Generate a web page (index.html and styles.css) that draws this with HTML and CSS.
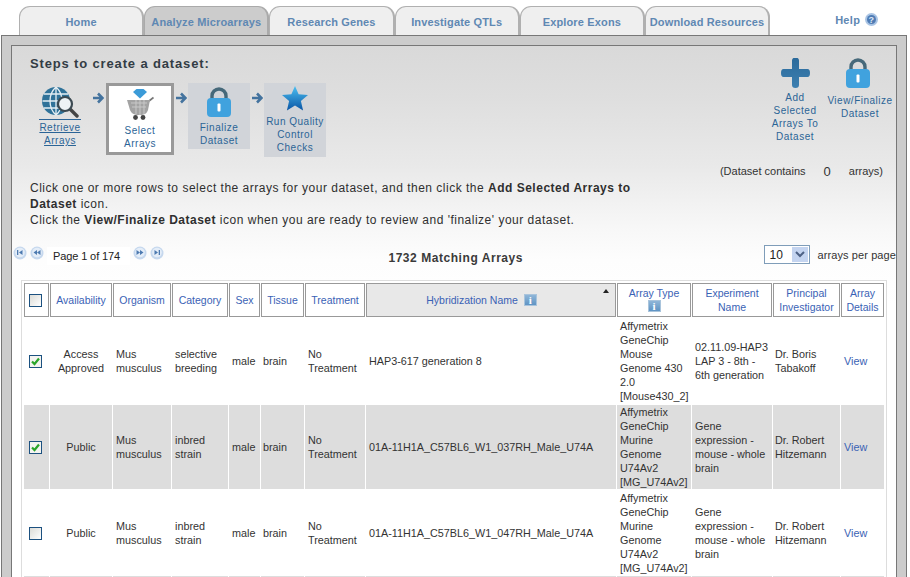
FILE: index.html
```html
<!DOCTYPE html>
<html lang="en">
<head>
    <meta charset="UTF-8">
    <title>Analyze Microarrays</title>
    <link rel="stylesheet" href="styles.css">
</head>
<body>
    <svg class="defs" width="0" height="0">
        <defs>
            <linearGradient id="starFill" x1="0" y1="0" x2="0" y2="1">
                <stop offset="0" stop-color="#4cc0f2"/>
                <stop offset="1" stop-color="#0a55a5"/>
            </linearGradient>
            <linearGradient id="plusFill" x1="0" y1="0" x2="0" y2="1">
                <stop offset="0" stop-color="#2b6a9b"/>
                <stop offset="1" stop-color="#3d7fb0"/>
            </linearGradient>
            <symbol id="arrow" viewBox="0 0 12 12">
                <path d="M1 6h8M6 1.500l4.500 4.500-4.500 4.500" fill="none" stroke="#44739e" stroke-width="2.600"/>
            </symbol>
            <symbol id="lock" viewBox="0 0 24 30">
                <path d="M5 13V9a7 7 0 0 1 14 0v4" fill="none" stroke="#46697a" stroke-width="3.400"/>
                <rect y="11" width="24" height="19" rx="4" fill="#40a2de"/>
                <rect x="10.500" y="16.500" width="3" height="8" rx="1" fill="#fff"/>
            </symbol>
            <symbol id="pageBtn" viewBox="0 0 14 14">
                <circle cx="7" cy="7" r="6.500" fill="#c6d8ee"/>
                <circle cx="7" cy="6.500" r="4.800" fill="#e4edf8"/>
            </symbol>
        </defs>
    </svg>

    <!-- Main tabs -->
    <div class="tabs">
        <a class="tab">Home</a>
        <a class="tab active">Analyze Microarrays</a>
        <a class="tab">Research Genes</a>
        <a class="tab">Investigate QTLs</a>
        <a class="tab">Explore Exons</a>
        <a class="tab">Download Resources</a>
        <a class="help">Help
            <svg width="13" height="13" viewBox="0 0 13 13">
                <circle cx="6.500" cy="6.500" r="6.500" fill="#a9c4e4"/>
                <circle cx="6.500" cy="6.500" r="4.500" fill="#4f7cb5"/>
                <text x="6.500" y="9.500" text-anchor="middle" class="help-mark">?</text>
            </svg>
        </a>
    </div>

    <div class="frame">
        <div class="inner">
            <div class="top">
                <div class="steps-col">
                    <h2>Steps to create a dataset:</h2>
                    <div class="steps">
                        <a class="step step-link">
                            <svg width="38" height="31" viewBox="0 0 38 31">
                                <circle cx="15" cy="14" r="14" fill="#2f7299"/>
                                <path d="M1.500 14h27M3 7h24M3 21h24M15 0v28M15 0c-8 7-8 21 0 28M15 0c8 7 8 21 0 28" fill="none" stroke="#e4eef4" stroke-width="1.300"/>
                                <path d="M28 21l8 8" stroke="#444" stroke-width="3.400" stroke-linecap="round"/>
                                <circle cx="24" cy="17" r="7" fill="#eef3f6" stroke="#3c4a52" stroke-width="2.200"/>
                            </svg>
                            <span class="step-label"><u class="over">Retrieve</u><br><u>Arrays</u></span>
                        </a>
                        <svg class="step-arrow" width="12" height="12"><use href="#arrow"/></svg>
                        <div class="step step-current">
                            <svg width="28" height="31" viewBox="0 0 28 31">
                                <path d="M7 3l3.500-3h7L21 3l-7 6.500z" fill="#3b9bd8"/>
                                <path d="M27.500 8.500L23 12" stroke="#777" stroke-width="1.600"/>
                                <path d="M1 11h23l-2 10c-1 3-3 5-9 5-5 0-8-2-9-5z" fill="#a3a3a3"/>
                                <path d="M5 14h16M6 18h14M10 11v14M14 11v15M18 11v14" stroke="#c8c8c8" stroke-width="1"/>
                                <circle cx="9.500" cy="28.500" r="2.400" fill="#444"/>
                                <circle cx="17" cy="28.500" r="2.400" fill="#444"/>
                            </svg>
                            <span class="step-label">Select<br>Arrays</span>
                        </div>
                        <svg class="step-arrow" width="12" height="12"><use href="#arrow"/></svg>
                        <div class="step step-next">
                            <svg width="24" height="30"><use href="#lock"/></svg>
                            <span class="step-label">Finalize<br>Dataset</span>
                        </div>
                        <svg class="step-arrow" width="12" height="12"><use href="#arrow"/></svg>
                        <div class="step step-next step-qc">
                            <svg width="26" height="25" viewBox="0 0 26 25">
                                <path d="M13 0l3.600 8.300 9.400.8-7.100 6 2.200 9.400L13 19.500 4.900 24.500l2.200-9.400-7.100-6 9.400-.8z" fill="url(#starFill)"/>
                            </svg>
                            <span class="step-label">Run Quality<br>Control<br>Checks</span>
                        </div>
                    </div>
                </div>
                <div class="actions">
                    <a class="action action-add">
                        <svg width="29" height="30" viewBox="0 0 29 30">
                            <path d="M11 2.500a3 2.500 0 0 1 7 0V11h8.500a2.500 4 0 0 1 0 8H18v8a3 2.500 0 0 1-7 0v-8H2.500a2.500 4 0 0 1 0-8H11z" fill="url(#plusFill)"/>
                        </svg>
                        <span class="step-label">Add<br>Selected<br>Arrays To<br>Dataset</span>
                    </a>
                    <a class="action action-view">
                        <svg class="view-lock" width="24" height="30"><use href="#lock"/></svg>
                        <span class="step-label">View/Finalize<br>Dataset</span>
                    </a>
                </div>
            </div>

            <div class="dataset-count">
                <span>(Dataset contains</span>
                <span class="count">0</span>
                <span>arrays)</span>
            </div>

            <p class="instructions">
                Click one or more rows to select the arrays for your dataset, and then click the <b>Add Selected Arrays to</b><br>
                <b>Dataset</b> icon.<br>
                Click the <b>View/Finalize Dataset</b> icon when you are ready to review and 'finalize' your dataset.
            </p>

            <!-- Pager -->
            <div class="pager-row">
                <div class="pager">
                    <svg class="page-btn" width="14" height="14" viewBox="0 0 14 14"><use href="#pageBtn"/><path d="M4 4h1.300v5H4zM9.500 4v5L6 6.500z" fill="#4d7ab0"/></svg>
                    <svg class="page-btn" width="14" height="14" viewBox="0 0 14 14"><use href="#pageBtn"/><path d="M7 4v5L3.500 6.500zM10.500 4v5L7 6.500z" fill="#4d7ab0"/></svg>
                    <span class="page-text">Page 1 of 174</span>
                    <svg class="page-btn" width="14" height="14" viewBox="0 0 14 14"><use href="#pageBtn"/><path d="M3.500 4v5L7 6.500zM7 4v5l3.500-2.500z" fill="#4d7ab0"/></svg>
                    <svg class="page-btn" width="14" height="14" viewBox="0 0 14 14"><use href="#pageBtn"/><path d="M4.500 4v5L8 6.500zM8.700 4H10v5H8.700z" fill="#4d7ab0"/></svg>
                </div>
                <div class="matching">1732 Matching Arrays</div>
                <div class="per-page">
                    <div class="fake-select">
                        <span class="fake-value">10</span>
                        <span class="fake-arrow">
                            <svg width="10" height="7" viewBox="0 0 10 7"><path d="M1 1l4 4 4-4" fill="none" stroke="#4d6185" stroke-width="2"/></svg>
                        </span>
                    </div>
                    <span>arrays per page</span>
                </div>
            </div>

            <div class="table-wrap">
                <table class="arrays">
                    <colgroup>
                        <col class="c-check"><col class="c-avail"><col class="c-org"><col class="c-cat">
                        <col class="c-sex"><col class="c-tissue"><col class="c-treat"><col class="c-hyb">
                        <col class="c-type"><col class="c-exp"><col class="c-pi"><col class="c-view">
                    </colgroup>
                    <thead>
                        <tr>
                            <th><span class="check"></span></th>
                            <th>Availability</th>
                            <th>Organism</th>
                            <th>Category</th>
                            <th>Sex</th>
                            <th>Tissue</th>
                            <th>Treatment</th>
                            <th class="sorted">Hybridization Name <span class="info">i</span><span class="sort-up"></span></th>
                            <th class="type-head">Array Type<br><span class="info">i</span></th>
                            <th>Experiment<br>Name</th>
                            <th>Principal<br>Investigator</th>
                            <th>Array<br>Details</th>
                        </tr>
                    </thead>
                    <tbody>
                        <tr>
                            <td class="check-cell"><span class="check checked"><svg width="11" height="11" viewBox="0 0 11 11"><path d="M2 5.500l2.500 2.500L9 2.500" fill="none" stroke="#2aa52a" stroke-width="2.200"/></svg></span></td>
                            <td class="center">Access<br>Approved</td>
                            <td>Mus<br>musculus</td>
                            <td>selective<br>breeding</td>
                            <td>male</td>
                            <td class="tight">brain</td>
                            <td>No<br>Treatment</td>
                            <td>HAP3-617 generation 8</td>
                            <td>Affymetrix<br>GeneChip<br>Mouse<br>Genome 430<br>2.0<br>[Mouse430_2]</td>
                            <td>02.11.09-HAP3<br>LAP 3 - 8th -<br>6th generation</td>
                            <td class="tight">Dr. Boris<br>Tabakoff</td>
                            <td><a class="view">View</a></td>
                        </tr>
                        <tr class="alt">
                            <td class="check-cell"><span class="check checked"><svg width="11" height="11" viewBox="0 0 11 11"><path d="M2 5.500l2.500 2.500L9 2.500" fill="none" stroke="#2aa52a" stroke-width="2.200"/></svg></span></td>
                            <td class="center">Public</td>
                            <td>Mus<br>musculus</td>
                            <td>inbred<br>strain</td>
                            <td>male</td>
                            <td class="tight">brain</td>
                            <td>No<br>Treatment</td>
                            <td>01A-11H1A_C57BL6_W1_037RH_Male_U74A</td>
                            <td>Affymetrix<br>GeneChip<br>Murine<br>Genome<br>U74Av2<br>[MG_U74Av2]</td>
                            <td>Gene<br>expression -<br>mouse - whole<br>brain</td>
                            <td class="tight">Dr. Robert<br>Hitzemann</td>
                            <td><a class="view">View</a></td>
                        </tr>
                        <tr>
                            <td class="check-cell"><span class="check"></span></td>
                            <td class="center">Public</td>
                            <td>Mus<br>musculus</td>
                            <td>inbred<br>strain</td>
                            <td>male</td>
                            <td class="tight">brain</td>
                            <td>No<br>Treatment</td>
                            <td>01A-11H1A_C57BL6_W1_047RH_Male_U74A</td>
                            <td>Affymetrix<br>GeneChip<br>Murine<br>Genome<br>U74Av2<br>[MG_U74Av2]</td>
                            <td>Gene<br>expression -<br>mouse - whole<br>brain</td>
                            <td class="tight">Dr. Robert<br>Hitzemann</td>
                            <td><a class="view">View</a></td>
                        </tr>
                        <tr class="alt">
                            <td></td><td></td><td></td><td></td><td></td><td></td>
                            <td></td><td></td><td></td><td></td><td></td><td></td>
                        </tr>
                    </tbody>
                </table>
            </div>
        </div>
    </div>
</body>
</html>
```

FILE: styles.css
```css
html, body {
    margin: 0;
    height: 577px;
    overflow: hidden;
    background-color: #fff;
}
body {
    font-family: "Liberation Sans", Arial, sans-serif;
    font-size: 11px;
    color: #333;
}
.defs {
    display: block;
    height: 0;
}

/* Tabs */
.tabs {
    display: flex;
    align-items: flex-end;
    height: 35px;
    padding-left: 19px;
    box-sizing: border-box;
}
.tab {
    box-sizing: border-box;
    width: 125.200px;
    height: 29px;
    padding-top: 9px;
    text-align: center;
    font-weight: bold;
    font-size: 11px;
    letter-spacing: 0.15px;
    white-space: nowrap;
    color: #5f88b3;
    background-color: #efefef;
    border: 1px solid #b0b0b0;
    border-bottom: none;
    border-right-width: 2px;
    border-radius: 11px 11px 0 0;
}
.tab.active {
    background-color: #ccc;
    border-color: #aaa;
}
.help {
    display: flex;
    align-items: center;
    gap: 5px;
    margin-left: 65px;
    padding-bottom: 9px;
    font-weight: bold;
    letter-spacing: 0.3px;
    color: #5f88b3;
}
.help-mark {
    font-size: 9px;
    font-weight: bold;
    fill: #dfe9f5;
}

/* Frame */
.frame {
    margin: 0 3px 0 1px;
    height: 600px;
    padding: 9px 9px 0 9px;
    box-sizing: border-box;
    background-color: #ccc;
    border: 1px solid #777;
    border-bottom: none;
}
.inner {
    height: 600px;
    border: 1px solid #777;
    border-bottom: none;
    background: linear-gradient(#d9d9d9 0, #dedede 50px, #e9e9e9 120px, #f8f8f8 185px, #fdfdfd 215px, #fff 260px);
}
.top {
    display: flex;
    justify-content: space-between;
    height: 117px;
}
.steps-col h2 {
    margin: 10px 0 0 18px;
    font-size: 13px;
    line-height: 16px;
    letter-spacing: 0.85px;
    color: #333d45;
}
.steps {
    display: flex;
    align-items: flex-start;
    margin: 11px 0 0 25px;
}
.step {
    display: flex;
    flex-direction: column;
    align-items: center;
    box-sizing: border-box;
    text-align: center;
}
.step-label {
    display: block;
    font-size: 10px;
    line-height: 13px;
    letter-spacing: 0.5px;
    color: #2b6496;
    white-space: nowrap;
}
.step-link {
    width: 46px;
    margin-right: 5px;
    padding-top: 4px;
}
.step-link .step-label {
    margin-top: 1px;
    padding-top: 2px;
}
.over {
    border-top: 1px solid #2b6496;
    padding-top: 2px;
}
.step-arrow {
    flex: none;
    margin: 9px 1px 0;
}
.step-arrow:first-of-type {
    margin-left: 4px;
    margin-right: 2px;
}
.step-current {
    width: 68px;
    height: 72px;
    padding-top: 3px;
    background-color: #fff;
    border: 3px solid #999;
}
.step-current .step-label {
    margin-top: 4px;
}
.step-next {
    width: 62px;
    height: 66px;
    padding-top: 4px;
    background-color: #d1d4d9;
}
.step-next .step-label {
    margin-top: 4px;
}
.step-qc {
    height: 74px;
    padding-top: 3px;
}
.step-qc .step-label {
    margin-top: 4px;
}
.actions {
    display: flex;
    align-items: flex-start;
    padding: 12px 1px 0 0;
}
.action {
    display: flex;
    flex-direction: column;
    align-items: center;
    text-align: center;
}
.action-add {
    width: 50px;
}
.action-add .step-label {
    margin-top: 3px;
}
.action-view {
    width: 70px;
    margin-left: 5px;
}
.action-view .step-label {
    margin-top: 6px;
}
.view-lock {
    margin-right: 4px;
}

.dataset-count {
    display: flex;
    justify-content: flex-end;
    align-items: center;
    gap: 18px;
    height: 16px;
    padding-right: 13px;
    color: #333;
}
.count {
    font-size: 13px;
}
.instructions {
    width: 640px;
    margin: 1px 0 0 18px;
    font-size: 12px;
    line-height: 16px;
    letter-spacing: 0.5px;
    color: #2f2f2f;
}

/* Pager */
.pager-row {
    display: flex;
    align-items: flex-start;
    height: 35px;
    margin-top: 17px;
}
.pager {
    display: flex;
    align-items: flex-start;
    gap: 3px;
    width: 160px;
    margin: 1px 0 0 1px;
}
.page-btn {
    flex: none;
}
.page-text {
    width: 79px;
    padding: 3px 4px 3px 0;
    margin-top: 1px;
    text-align: center;
    background-color: #fff;
    font-size: 11px;
    letter-spacing: -0.1px;
    color: #222;
}
.matching {
    flex: 1;
    padding: 5px 26px 0 0;
    text-align: center;
    font-size: 12px;
    font-weight: bold;
    line-height: 16px;
    letter-spacing: 0.55px;
    color: #3a3a3a;
}
.per-page {
    display: flex;
    align-items: center;
    gap: 7px;
    height: 19px;
    font-size: 11px;
    letter-spacing: 0.1px;
    white-space: nowrap;
}
.fake-select {
    display: flex;
    align-items: center;
    box-sizing: border-box;
    width: 46px;
    height: 19px;
    padding: 1px;
    background-color: #fff;
    border: 1px solid #7f9db9;
}
.fake-value {
    flex: 1;
    padding-left: 3px;
    font-size: 12px;
    color: #222;
}
.fake-arrow {
    display: flex;
    align-items: center;
    justify-content: center;
    width: 16px;
    height: 15px;
    background-color: #c4d4f0;
}

/* Table */
.table-wrap {
    margin-left: 9px;
    width: 866px;
    box-sizing: border-box;
    padding: 1px;
    background-color: #fff;
    border: 1px solid #ddd;
}
.arrays {
    table-layout: fixed;
    width: 862px;
    border-collapse: separate;
    border-spacing: 1px;
}
.c-check { width: 25px; }
.c-avail { width: 62px; }
.c-org { width: 58px; }
.c-cat { width: 56px; }
.c-sex { width: 31px; }
.c-tissue { width: 43px; }
.c-treat { width: 60px; }
.c-hyb { width: 250px; }
.c-type { width: 74px; }
.c-exp { width: 80px; }
.c-pi { width: 67px; }
.c-view { width: 43px; }

.arrays th {
    box-sizing: border-box;
    height: 34px;
    padding: 0 0 0 0;
    border: 1px solid #999;
    font-weight: normal;
    font-size: 10.500px;
    line-height: 14px;
    color: #3a62b5;
    background-color: #fff;
    text-align: center;
}
.arrays th:first-child {
    padding-right: 2px;
}
.arrays th.sorted {
    position: relative;
    padding-right: 19px;
    background-color: #e8e8e8;
}
.arrays th.type-head {
    line-height: 13px;
}
.sort-up {
    position: absolute;
    top: 5px;
    right: 6px;
    border-left: 3px solid transparent;
    border-right: 3px solid transparent;
    border-bottom: 4px solid #222;
}
.info {
    display: inline-block;
    width: 13px;
    height: 12px;
    margin-left: 3px;
    font-family: "Liberation Serif", serif;
    font-weight: bold;
    font-size: 11px;
    line-height: 11px;
    color: #fff;
    background: linear-gradient(#8fb6d8, #5f94c4);
    border: 1px solid #a9c4dc;
    box-sizing: border-box;
}
.type-head .info {
    margin-left: 0;
}
.arrays td {
    box-sizing: border-box;
    height: 85px;
    padding: 0 0 0 3px;
    font-size: 10.800px;
    line-height: 14px;
    color: #333;
    vertical-align: middle;
    white-space: nowrap;
}
.arrays tbody tr:first-child td {
    height: 86px;
}
.arrays tbody tr:nth-child(2) td {
    height: 84px;
}
.arrays tr.alt td {
    background-color: #ddd;
}
.arrays td.center {
    padding: 0;
    text-align: center;
}
.arrays td.tight {
    padding-left: 2px;
}
.arrays td.check-cell {
    padding: 0 2px 0 0;
    text-align: center;
}
.check {
    display: inline-flex;
    align-items: center;
    justify-content: center;
    box-sizing: border-box;
    width: 13px;
    height: 13px;
    vertical-align: middle;
    background: linear-gradient(135deg, #dcdcd7, #fff);
    border: 1px solid #1c5180;
}
.check.checked {
    background: #f4f4f0;
}
.view {
    color: #3a62b5;
}
```
